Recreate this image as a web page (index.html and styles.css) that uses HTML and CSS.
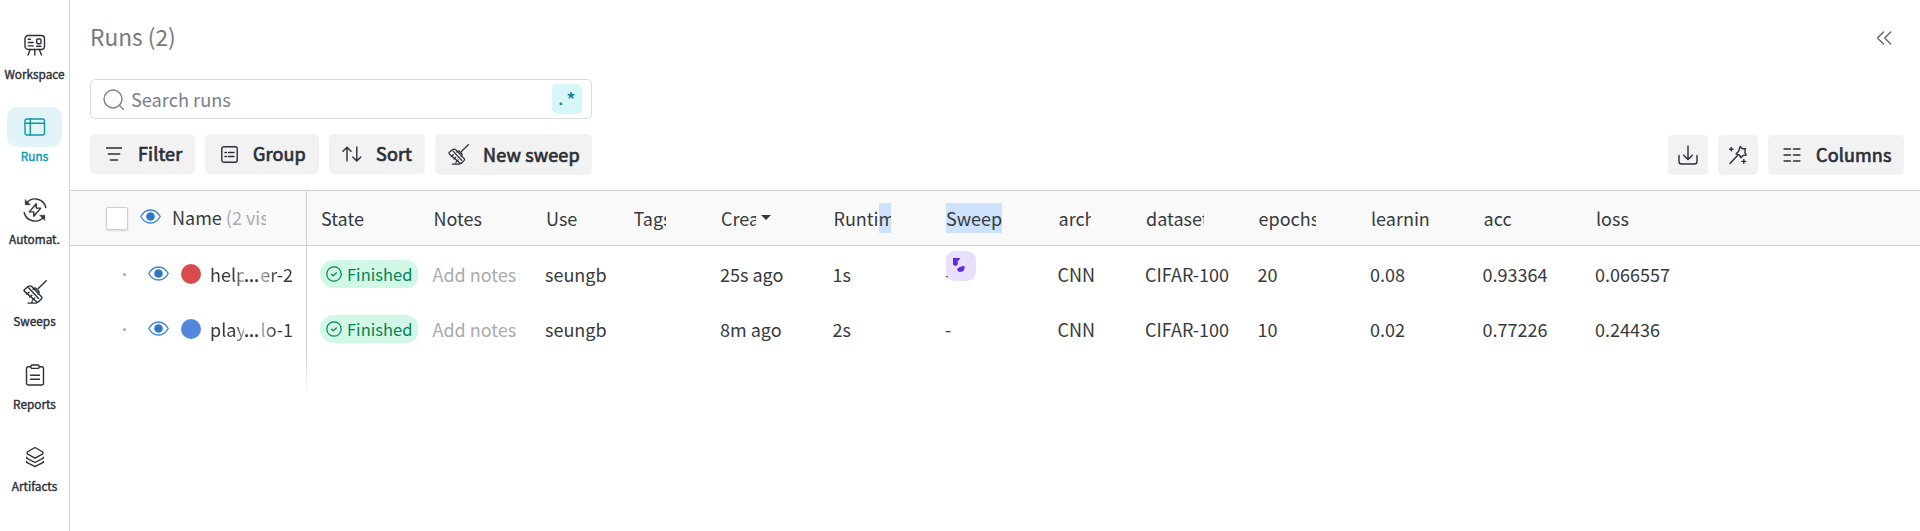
FILE: index.html
```html
<!DOCTYPE html>
<html lang="en">
<head>
<meta charset="utf-8">
<title>Runs</title>
<link rel="stylesheet" href="styles.css">
</head>
<body>
<svg class="defs" width="0" height="0">
  <symbol id="broom" viewBox="0 0 24 24">
    <path d="M23.300 .8 15.300 8.600M12.800 8.300l2.900 2.900c.6.600.6 1.300 0 1.900l-.7.900M12.800 8.300c-.6-.5-1.200-.4-1.700 0l-1 .9M8.700 6.500l9.800 10.300c.5.600.5 1.300 0 1.900l-2.900 3c-.6.600-1.400.6-2 0L1.500 11.400c-.6-.7-.6-1.300 0-1.900L5 6.600c1.200-.9 2.500-1 3.700-.1ZM5.800 8.100l9.800 10.500M3.800 14.200l2.200-1.900M6.700 17.100l2.200-1.900M9.500 20l2.100-1.900M5 23.100h8.500M9 21.500v1.600"/>
  </symbol>
  <symbol id="eye" viewBox="0 0 21 15">
    <path d="M.8 7.500C3 3.500 6.400 1 10.500 1s7.500 2.500 9.700 6.500C18 11.500 14.600 14 10.500 14S3 11.500.8 7.500Z" fill="#fff" stroke="#3a84d2" stroke-width="1.300"/>
    <circle cx="10.500" cy="7.500" r="4.300" fill="#2e78c7"/>
  </symbol>
  <symbol id="check" viewBox="0 0 16 16">
    <circle cx="8" cy="8" r="7.200"/><path d="M5.500 8.200 7.300 9.800 10.500 6.800"/>
  </symbol>
</svg>
<div class="app">
  <nav class="sidebar">
    <a class="nav-item"><span class="pill"><svg class="icon" width="22" height="22" viewBox="0 0 22 22"><rect x="1" y="1.500" width="19.500" height="14" rx="3.200"/><rect x="12.700" y="5" width="4.300" height="4.800" rx="1"/><path d="M4.200 5.200h2.300M4.200 8.500h5M4.200 11.900h5M12.700 12.300h4.300M6.200 15.500 4 21M10.800 15.500V21M15.300 15.500 17.500 21"/></svg></span><span class="label">Workspace</span></a>
    <a class="nav-item active"><span class="pill"><svg class="icon" width="22" height="22" viewBox="0 0 22 22"><rect x="1" y="3" width="19.500" height="16" rx="2"/><path d="M1 7.200h19.500M6.300 3v16"/></svg></span><span class="label">Runs</span></a>
    <a class="nav-item"><span class="pill"><svg class="icon" width="24" height="24" viewBox="0 0 24 24"><path d="M3.600 4.900A11 11 0 0 1 22.800 9.500M20.400 19.100A11 11 0 0 1 1.200 14.500M13.200 5.800v4.300h4.500L10.800 18.300v-4.400H6.300Z"/><path d="M2.200 1.800v5h5ZM21.800 22.200v-5h-5Z" fill="currentColor" stroke-width=".5"/></svg></span><span class="label">Automat.</span></a>
    <a class="nav-item"><span class="pill"><svg class="icon" width="24" height="24"><use href="#broom"/></svg></span><span class="label">Sweeps</span></a>
    <a class="nav-item"><span class="pill"><svg class="icon" width="20" height="22" viewBox="0 0 20 22"><rect x="1.500" y="2.700" width="17" height="18.300" rx="2"/><rect x="5.900" y="1" width="8.200" height="3.400" rx="1.200" fill="#fff"/><path d="M5.500 11.200h9M5.500 15.200h9"/></svg></span><span class="label">Reports</span></a>
    <a class="nav-item"><span class="pill"><svg class="icon" width="20" height="22" viewBox="0 0 20 22"><path d="M10 1.500 17.800 6v1.800L10 12.200 2.200 7.800V6ZM1.700 11.200v1L10 16.500l8.300-4.300v-1M1.700 15.400v1L10 20.700l8.300-4.300v-1"/></svg></span><span class="label">Artifacts</span></a>
  </nav>
  <main class="main">
    <header class="title-bar">
      <h1 class="title">Runs (2)</h1>
      <svg class="icon collapse" width="16" height="14" viewBox="0 0 16 14"><path d="M7.500 1 1.500 7l6 6M14.700 1l-6 6 6 6"/></svg>
    </header>
    <div class="search">
      <svg class="icon" width="21" height="21" viewBox="0 0 21 21"><circle cx="10" cy="10" r="9"/><path d="m16.300 16.300 4.200 4.200"/></svg>
      <span class="placeholder">Search runs</span>
      <span class="regex"><span>.</span><span class="star">*</span></span>
    </div>
    <div class="toolbar">
      <button class="btn filter"><svg class="icon" width="16" height="16" viewBox="0 0 16 16"><path d="M0 2h16M2.300 8h11.400M4.300 14h7.400"/></svg><span>Filter</span></button>
      <button class="btn group"><svg class="icon" width="17" height="17" viewBox="0 0 17 17"><rect x=".8" y=".8" width="15.400" height="15.400" rx="2"/><path d="M4 6.500h1.500M7.500 6.500h5.500M4 10.500h1.500M7.500 10.500h5.500"/></svg><span>Group</span></button>
      <button class="btn sort"><svg class="icon" width="20" height="16" viewBox="0 0 20 16"><path d="M5 15V1.200M1 5.200l4-4 4 4M14.800 1v14M10.800 11l4 4 4-4"/></svg><span>Sort</span></button>
      <button class="btn sweep"><svg class="icon" width="21" height="21"><use href="#broom"/></svg><span>New sweep</span></button>
      <span class="spacer"></span>
      <button class="btn square"><svg class="icon" width="20" height="20" viewBox="0 0 20 20"><path d="M10 1v13.500M5.700 10.300l4.300 4.200 4.300-4.200M1 10.500v6C1 18 2 19 3.500 19h13c1.500 0 2.500-1 2.500-2.500v-6"/></svg></button>
      <button class="btn square"><svg class="icon" width="20" height="20" viewBox="0 0 20 20"><path d="m12.200 1.500 2.100 2.300 3.200-.1-.7 3.400 1.400 2.900-3.200.4-2.200 2.300-1.500-2.800-3.200-1.100 2.400-2.300ZM9.500 10.500 2 18.500M3.300 2.500v3.400M1.600 4.200H5M15.800 14.500v3.800M13.900 16.400h3.800"/></svg></button>
      <button class="btn columns"><svg class="icon" width="18" height="16" viewBox="0 0 18 16"><path d="M1 2h6.500M10.500 2H17M1 8h6.500M10.500 8H17M1 14h6.500M10.500 14H17"/></svg><span>Columns</span></button>
    </div>
    <div class="table">
      <div class="row head">
        <div class="pinned">
          <span class="checkbox"></span>
          <svg class="eye" width="21" height="15"><use href="#eye"/></svg>
          <span class="name">Name <span class="muted">(2 vis</span></span>
        </div>
        <div class="cell"><span class="clip">State</span></div>
        <div class="cell"><span class="clip">Notes</span></div>
        <div class="cell"><span class="clip">Use</span></div>
        <div class="cell"><span class="clip">Tags</span></div>
        <div class="cell"><span class="clip created">Crea</span><span class="caret"></span></div>
        <div class="cell"><span class="clip">Runti<span class="selected">m</span></span></div>
        <div class="cell"><span class="clip"><span class="selected">Sweep</span></span></div>
        <div class="cell"><span class="clip">arch</span></div>
        <div class="cell"><span class="clip">dataset</span></div>
        <div class="cell"><span class="clip">epochs</span></div>
        <div class="cell"><span class="clip">learnin</span></div>
        <div class="cell"><span class="clip">acc</span></div>
        <div class="cell"><span class="clip">loss</span></div>
      </div>
      <div class="row">
        <div class="pinned">
          <span class="bullet"></span>
          <svg class="eye" width="21" height="15"><use href="#eye"/></svg>
          <span class="dot red"></span>
          <span class="run"><span class="start">help</span><span class="dots">...</span><span class="end">er-2</span></span>
        </div>
        <div class="cell"><span class="badge"><svg class="icon" width="16" height="16"><use href="#check"/></svg>Finished</span></div>
        <div class="cell muted">Add notes</div>
        <div class="cell"><span class="user">seungb</span></div>
        <div class="cell"></div>
        <div class="cell">25s ago</div>
        <div class="cell">1s</div>
        <div class="cell anchor">-<span class="bubble"><svg width="30" height="30" viewBox="0 0 30 30"><path d="M7 7h7.500l-3 3.700.5 2.300-2.300 2.200L7 13.500ZM11 18c2-2 4.500-3 7.500-3 .5 3-1 6-4.500 6-1.500 0-2.500-1-3-3Z" fill="#5b2be0"/></svg></span></div>
        <div class="cell">CNN</div>
        <div class="cell">CIFAR-100</div>
        <div class="cell">20</div>
        <div class="cell">0.08</div>
        <div class="cell">0.93364</div>
        <div class="cell">0.066557</div>
      </div>
      <div class="row">
        <div class="pinned">
          <span class="bullet"></span>
          <svg class="eye" width="21" height="15"><use href="#eye"/></svg>
          <span class="dot blue"></span>
          <span class="run"><span class="start">play</span><span class="dots">...</span><span class="end">lo-1</span></span>
        </div>
        <div class="cell"><span class="badge"><svg class="icon" width="16" height="16"><use href="#check"/></svg>Finished</span></div>
        <div class="cell muted">Add notes</div>
        <div class="cell"><span class="user">seungb</span></div>
        <div class="cell"></div>
        <div class="cell">8m ago</div>
        <div class="cell">2s</div>
        <div class="cell">-</div>
        <div class="cell">CNN</div>
        <div class="cell">CIFAR-100</div>
        <div class="cell">10</div>
        <div class="cell">0.02</div>
        <div class="cell">0.77226</div>
        <div class="cell">0.24436</div>
      </div>
      <div class="tail"></div>
    </div>
  </main>
</div>
</body>
</html>
```
FILE: styles.css
```css
* { box-sizing: border-box; }
body {
  margin: 0;
  background: #fff;
  color: #363a3d;
  font: 18px/24px "Noto Sans CJK SC", sans-serif;
  overflow: hidden;
}
.defs { position: absolute; }
.app { display: flex; height: 531px; }
.icon { fill: none; stroke: currentColor; stroke-width: 1.400; stroke-linecap: round; stroke-linejoin: round; flex: none; }

.sidebar {
  width: 70px;
  flex: none;
  padding: 24.500px 0 0;
  border-right: 1px solid #d4d5d6;
  display: flex;
  flex-direction: column;
  align-items: center;
}
.nav-item { height: 82.500px; flex: none; display: flex; flex-direction: column; align-items: center; color: #2b3038; }
.pill { width: 55px; height: 40px; border-radius: 10px; display: flex; align-items: center; justify-content: center; }
.label { font-size: 11.800px; line-height: 17px; -webkit-text-stroke: .4px currentColor; white-space: nowrap; }
.active { color: #0d98ab; }
.active .pill { background: #e2f4f7; }

.main { flex: 1; min-width: 0; }
.title-bar { display: flex; justify-content: space-between; align-items: center; height: 79px; padding: 0 28px 3px 20px; }
.title { margin: -3px 0 0; font-size: 22.700px; font-weight: 400; line-height: 30px; color: #76797d; }
.collapse { color: #5f646c; }
.search {
  width: 502px;
  height: 40px;
  margin-left: 20px;
  padding: 0 9px 0 12px;
  border: 1px solid #dcdcdd;
  border-radius: 5px;
  display: flex;
  align-items: center;
  color: #79808a;
}
.placeholder { flex: 1; margin-left: 7px; font-size: 18.200px; }
.regex { width: 30px; height: 30px; border-radius: 5px; background: #d7f6f9; color: #038194; -webkit-text-stroke: .2px; display: flex; justify-content: center; gap: 3px; line-height: 27px; }
.star { line-height: 31px; font-size: 20px; }

.toolbar { display: flex; gap: 10px; height: 71px; padding: 15px 16px 0 20px; }
.btn {
  height: 40px;
  border: 0;
  border-radius: 5px;
  background: #f2f2f2;
  color: #2b3038;
  font: 400 18px/24px "Noto Sans CJK SC", sans-serif;
  display: flex;
  align-items: center;
  padding: 0;
  white-space: nowrap;
}
.btn span { -webkit-text-stroke: .7px currentColor; letter-spacing: .15px; margin-top: -2px; }
.filter { width: 105px; padding-left: 16px; gap: 16px; }
.group { width: 114px; padding-left: 16px; gap: 15px; }
.sort { width: 96px; padding-left: 13px; gap: 14px; }
.sweep { width: 157px; height: 41px; padding-left: 13px; gap: 14px; }
.spacer { flex: 1; }
.square { width: 40px; justify-content: center; margin-top: 1px; }
.columns { width: 136px; padding-left: 15px; gap: 15px; margin-top: 1px; }

.row {
  display: grid;
  grid-template-columns: 237.500px 112.500px 112.500px 87.500px 87.500px 112.500px 112.500px 112.500px 87.500px 112.500px 112.500px 112.500px 112.500px 1fr;
  height: 55px;
}
.head { height: 56px; background: #f9f9f9; border: solid #cfcfcf; border-width: 1px 0; }
.pinned { width: 237px; border-right: 1px solid #cfcfcf; display: flex; align-items: center; padding-left: 53px; }
.head .pinned { padding-left: 36px; }
.cell { display: flex; align-items: center; padding: 1px 0 0 12.500px; white-space: nowrap; }
.head .cell { padding: 0 41.500px 1px 13.500px; }
.clip { overflow: hidden; line-height: 30px; flex: 1; }
.created { flex: none; width: 35px; }
.caret { margin-left: 5px; flex: none; border: solid transparent; border-width: 5px 5px 0; border-top-color: #363a3d; }
.selected { background: #cce2ff; display: inline-block; }
.muted { color: #a9abad; }
.checkbox { width: 22px; height: 23px; background: #fff; border: 1px solid #cfcfcf; border-radius: 2px; box-shadow: 0 1px 2px #0002; }
.head .eye { margin: 0 11px 4px 12px; }
.name { width: 94px; overflow: hidden; white-space: nowrap; margin-top: -2px; }
.bullet { width: 3px; height: 3px; border-radius: 50%; background: #aaa; margin: 1px 22px 0 0; }
.eye { flex: none; }
.dot { width: 20px; height: 20px; border-radius: 50%; margin: 0 9px 0 12px; }
.red { background: #da4c4c; }
.blue { background: #5387dd; }
.run { display: flex; width: 83px; padding-top: 1px; }
.start { width: 34px; overflow: hidden; mask-image: linear-gradient(90deg, #000 75%, #0006); }
.dots { -webkit-text-stroke: .4px; }
.end { margin-left: auto; mask-image: linear-gradient(90deg, #0006, #000 50%); }
.badge { height: 28px; width: 98px; border-radius: 14px 12px 12px 14px; background: #d1f8e6; color: #058353; display: flex; align-items: center; gap: 5px; padding-left: 6px; font-size: 16.500px; }
.badge .icon { stroke-width: 1.200; }
.user { width: 61px; overflow: hidden; }
.anchor { position: relative; }
.bubble { position: absolute; left: 13.500px; top: 5px; width: 30px; height: 30px; border-radius: 9px; background: #e9e0ff; }
.bubble svg { display: block; }
.tail { width: 237px; height: 40px; border-right: 1px solid; border-image: linear-gradient(#cfcfcf, #fff) 1; border-width: 0 1px 0 0; border-style: solid; }
```
